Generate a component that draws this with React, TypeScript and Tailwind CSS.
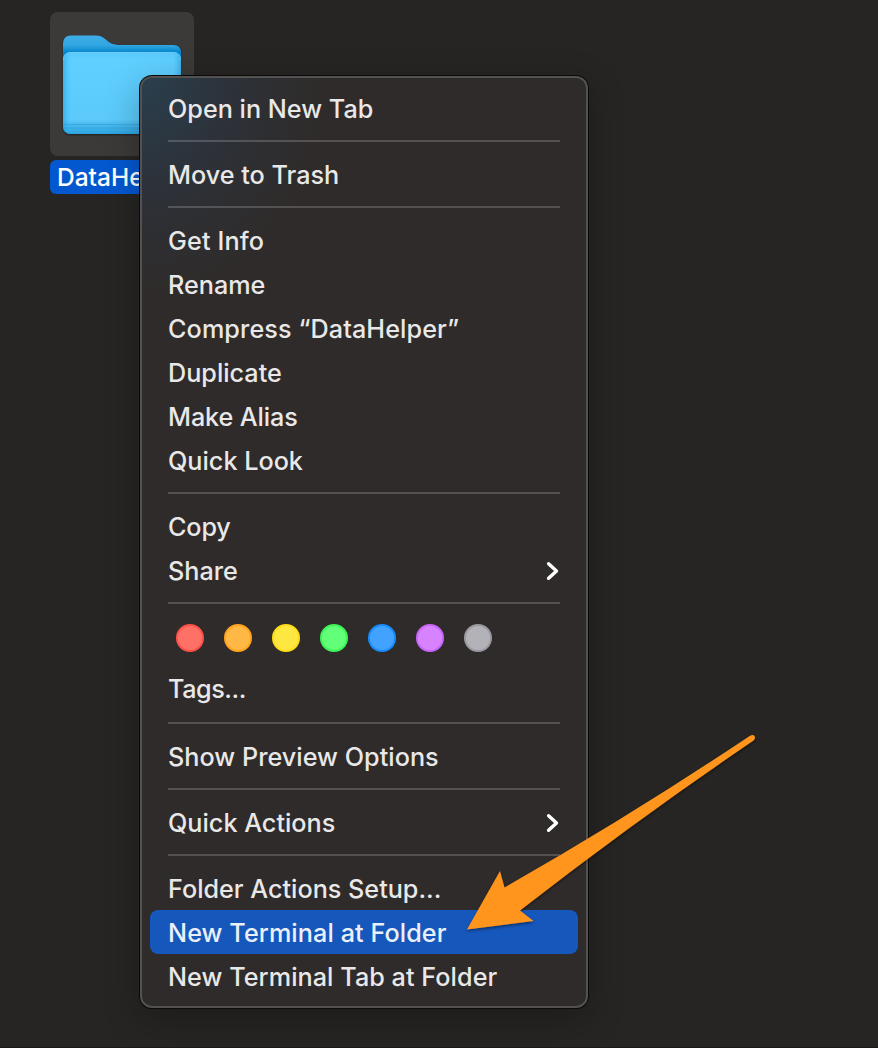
type Entry =
  | { kind: "item"; label: string; tracking?: string; submenu?: boolean; active?: boolean }
  | { kind: "separator" }
  | { kind: "tags" };

const separator: Entry = { kind: "separator" };

const entries: Entry[] = [
  { kind: "item", label: "Open in New Tab" },
  separator,
  { kind: "item", label: "Move to Trash" },
  separator,
  { kind: "item", label: "Get Info", tracking: "tracking-[0.15px]" },
  { kind: "item", label: "Rename" },
  { kind: "item", label: "Compress “DataHelper”", tracking: "tracking-[0.1px]" },
  { kind: "item", label: "Duplicate" },
  { kind: "item", label: "Make Alias", tracking: "tracking-[-0.1px]" },
  { kind: "item", label: "Quick Look" },
  separator,
  { kind: "item", label: "Copy", tracking: "tracking-[-0.15px]" },
  { kind: "item", label: "Share", submenu: true },
  separator,
  { kind: "tags" },
  separator,
  { kind: "item", label: "Show Preview Options", tracking: "tracking-[0.03px]" },
  separator,
  { kind: "item", label: "Quick Actions", submenu: true },
  separator,
  { kind: "item", label: "Folder Actions Setup..." },
  { kind: "item", label: "New Terminal at Folder", tracking: "tracking-[0.08px]", active: true },
  { kind: "item", label: "New Terminal Tab at Folder", tracking: "tracking-[0.05px]" },
];

const tagColors = [
  "bg-[#ff7067] border-[#ff5147]",
  "bg-[#ffb745] border-[#ffa41c]",
  "bg-[#ffe742] border-[#ffdd14]",
  "bg-[#62ff78] border-[#3cf555]",
  "bg-[#42a2ff] border-[#158cff]",
  "bg-[#d783ff] border-[#c965fb]",
  "bg-[#b3b2b8] border-[#9a999f]",
];

function Chevron() {
  return (
    <svg className="mt-0.5" width="14" height="20" viewBox="0 0 14 20" fill="none" aria-hidden="true">
      <path d="M2.6 2.7 L10.5 10 L2.6 17.3" stroke="#fff" strokeWidth="3.4" strokeLinecap="round" strokeLinejoin="round" />
    </svg>
  );
}

function Row({ entry }: { entry: Entry }) {
  if (entry.kind === "separator") {
    return (
      <div className="flex h-[22px] items-center px-[18px]">
        <div className="h-0.5 w-full bg-white/18" />
      </div>
    );
  }
  if (entry.kind === "tags") {
    return (
      <div className="h-[98px] px-[18px] pt-2.5">
        <div className="flex gap-5 pl-2">
          {tagColors.map((c) => (
            <span key={c} className={`size-7 rounded-full border-2 ${c}`} />
          ))}
        </div>
        <div className="mt-[15px] h-11 leading-[44px] tracking-[-0.45px]">Tags...</div>
      </div>
    );
  }
  return (
    <div className={`flex h-11 items-center justify-between rounded-lg px-[18px] ${entry.active ? "bg-[#1657bb] text-[#eaf0fa]" : ""}`}>
      <span className={`pt-0.5 leading-10 whitespace-nowrap ${entry.tracking ?? ""}`}>{entry.label}</span>
      {entry.submenu && <Chevron />}
    </div>
  );
}

function Folder() {
  return (
    <svg width="144" height="144" viewBox="0 0 144 144" aria-hidden="true">
      <defs>
        <linearGradient id="back" x1="0" y1="0" x2="0" y2="1">
          <stop offset="0" stopColor="#3eaee8" />
          <stop offset="0.1" stopColor="#30a5e2" />
          <stop offset="0.17" stopColor="#0687cb" />
        </linearGradient>
        <linearGradient id="front" x1="0" y1="0" x2="0" y2="1">
          <stop offset="0" stopColor="#59c9fb" />
          <stop offset="0.1" stopColor="#5fd0ff" />
          <stop offset="0.83" stopColor="#5bcafb" />
          <stop offset="0.87" stopColor="#4fbdf0" />
          <stop offset="0.93" stopColor="#3eb2e9" />
          <stop offset="1" stopColor="#2da3df" />
        </linearGradient>
        <linearGradient id="edge" x1="0" y1="0" x2="1" y2="0">
          <stop offset="0" stopColor="#1f9ad8" stopOpacity="0.55" />
          <stop offset="0.07" stopColor="#41b8ef" stopOpacity="0" />
          <stop offset="0.93" stopColor="#41b8ef" stopOpacity="0" />
          <stop offset="1" stopColor="#1f9ad8" stopOpacity="0.55" />
        </linearGradient>
        <filter id="folderShadow" x="-10%" y="-10%" width="120%" height="125%">
          <feDropShadow dx="0" dy="1" stdDeviation="1" floodColor="#000" floodOpacity="0.45" />
        </filter>
      </defs>
      <g filter="url(#folderShadow)">
        <path d="M13 32 Q13 23.5 21 23.5 H46 Q51 23.5 54.5 26.5 L59 30.3 Q62.5 33 68 33 H123 Q131 33 131 41 V114 Q131 122 123 122 H21 Q13 122 13 114 Z" fill="url(#back)" />
        <rect x="13" y="40" width="118" height="82" rx="8" fill="url(#front)" />
        <rect x="13" y="40" width="118" height="82" rx="8" fill="url(#edge)" />
        <path d="M14 112.5 H130 M14 116 H130" stroke="#319fda" strokeOpacity="0.6" />
        <path d="M13.5 48 Q13.5 40.5 21 40.5 H123 Q130.5 40.5 130.5 48" fill="none" stroke="#70cff9" strokeOpacity="0.7" />
      </g>
    </svg>
  );
}

export default function App() {
  return (
    <div className="relative h-[1048px] w-[878px] overflow-hidden border-b border-[#1d171c] bg-[#262523] font-['Inter','Liberation_Sans',sans-serif] text-[25.2px] font-[460] text-[#e9e8e8]">
      <div className="ml-[50px] flex w-36 flex-col gap-1 pt-3">
        <div className="size-36 rounded-lg bg-[#3b3a38]">
          <Folder />
        </div>
        <div className="h-[34px] rounded-md bg-[#0358d0] pl-[7px] text-[24.5px] leading-[35px] text-white">DataHelper</div>
      </div>

      <div className="absolute top-[76px] left-[140px] h-[932px] w-[448px] rounded-[12px] border-2 border-[#545251] bg-[#2f2b2a] p-2 shadow-[0_0_0_1px_#0a0a0a,0_10px_36px_rgba(0,0,0,0.28)]">
        <div className="absolute inset-0 rounded-[10px] bg-[radial-gradient(ellipse_180px_220px_at_0_0,rgba(40,68,86,0.8),rgba(43,54,68,0.55)_50%,transparent)]" />
        <div className="relative">
          {entries.map((entry, i) => (
            <Row key={i} entry={entry} />
          ))}
        </div>
      </div>

      <svg className="absolute inset-0" width="878" height="1048" viewBox="0 0 878 1048" aria-hidden="true">
        <defs>
          <filter id="arrowShadow" x="-5%" y="-5%" width="110%" height="115%">
            <feDropShadow dx="0" dy="1.5" stdDeviation="1.5" floodColor="#000" floodOpacity="0.5" />
          </filter>
        </defs>
        <path
          d="M467 929.5 L500 871 L504.5 887.5 Q630 816 750.5 735.5 Q754 734 755 737 Q755.3 739 753.5 740.5 Q635 821 520 910.5 L533.5 921 Z"
          fill="#ff951b"
          filter="url(#arrowShadow)"
        />
      </svg>
    </div>
  );
}
